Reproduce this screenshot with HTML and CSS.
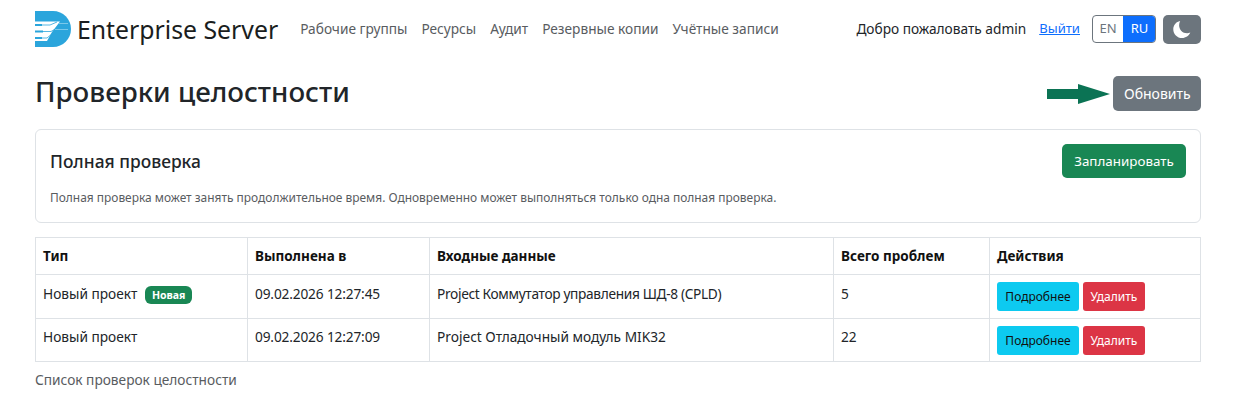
FILE: index.html
```html
<!DOCTYPE html>
<html lang="ru">
<head>
<meta charset="utf-8">
<title>Проверки целостности</title>
<link rel="stylesheet" href="styles.css">
</head>
<body>
<div class="container">
  <nav class="navbar">
    <a class="brand" href="#">
      <svg class="logo" width="36" height="36" viewBox="0 0 36 36">
        <path d="M0 0H18C28 0 36 8 36 18C36 28 28 36 18 36H0Z" fill="#2ba5dc"/>
        <path d="M0 10.5H25L17 21L12 30H0Z" fill="#fff"/>
        <path d="M0 14H7M0 20.5H8M0 27H7" stroke="#2ba5dc" stroke-width="2"/>
        <path d="M7 14H15L22 11M8 20.5H16L22 17M7 27H12L18 22" fill="none" stroke="#2ba5dc" stroke-width="0.8"/>
        <path d="M23 12.5H33M20 18.5H33" stroke="#8fd0ee" stroke-width="0.8"/>
      </svg>
      <span class="brand-name">Enterprise Server</span>
    </a>
    <ul class="nav-links">
      <li><a href="#">Рабочие группы</a></li>
      <li><a href="#">Ресурсы</a></li>
      <li><a href="#">Аудит</a></li>
      <li><a href="#">Резервные копии</a></li>
      <li><a href="#">Учётные записи</a></li>
    </ul>
    <div class="nav-right">
      <span class="welcome">Добро пожаловать admin</span>
      <a class="logout" href="#">Выйти</a>
      <div class="lang">
        <span class="lang-item">EN</span>
        <span class="lang-item active">RU</span>
      </div>
      <button class="theme" aria-label="Тема">
        <svg width="18" height="19" viewBox="0 0 20 20"><path d="M8 0.5C3.5 1.3 0.3 5.2 0.3 9.7C0.3 15.1 4.7 19.5 10.1 19.5C14.2 19.5 17.7 17 19.2 13.4C18.1 14 16.9 14.2 15.7 14.2C10.6 14.2 6.8 10.2 6.8 5.3C6.8 3.6 7.2 2 8 0.5Z" fill="#fff"/></svg>
      </button>
    </div>
  </nav>

  <header class="page-head">
    <h1>Проверки целостности</h1>
    <div class="refresh-wrap">
      <svg class="arrow" width="63" height="20" viewBox="0 0 63 20"><path d="M0 5H31V0L63 10L31 20V15H0Z" fill="#0b7354"/></svg>
      <button class="btn btn-gray">Обновить</button>
    </div>
  </header>

  <section class="card">
    <div class="card-top">
      <h2>Полная проверка</h2>
      <button class="btn btn-green">Запланировать</button>
    </div>
    <p>Полная проверка может занять продолжительное время. Одновременно может выполняться только одна полная проверка.</p>
  </section>

  <table class="table">
    <colgroup>
      <col class="c1"><col class="c2"><col class="c3"><col class="c4"><col class="c5">
    </colgroup>
    <thead>
      <tr><th>Тип</th><th>Выполнена в</th><th>Входные данные</th><th>Всего проблем</th><th>Действия</th></tr>
    </thead>
    <tbody>
      <tr>
        <td>Новый проект <span class="badge">Новая</span></td>
        <td class="date">09.02.2026 12:27:45</td>
        <td class="tight">Project Коммутатор управления ШД-8 (CPLD)</td>
        <td>5</td>
        <td class="actions"><button class="btn-sm info">Подробнее</button><button class="btn-sm danger">Удалить</button></td>
      </tr>
      <tr>
        <td>Новый проект</td>
        <td class="date">09.02.2026 12:27:09</td>
        <td>Project Отладочный модуль MIK32</td>
        <td>22</td>
        <td class="actions"><button class="btn-sm info">Подробнее</button><button class="btn-sm danger">Удалить</button></td>
      </tr>
    </tbody>
  </table>
  <p class="caption">Список проверок целостности</p>
</div>
</body>
</html>
```
FILE: styles.css
```css
* { box-sizing: border-box; }
html, body { margin: 0; padding: 0; }
body { background: #fff; color: #212529; font-family: "Noto Sans", "Open Sans", sans-serif; font-size: 13.7px; line-height: 1.5; }
a { text-decoration: none; }
button { font-family: inherit; border: 0; cursor: pointer; }
.container { width: 1166px; margin: 0 0 0 35px; }

.navbar { display: flex; align-items: center; height: 57px; padding-top: 1px; }
.brand { display: flex; align-items: center; color: #212529; margin-right: 22px; }
.logo { display: block; }
.brand-name { font-size: 24.8px; line-height: 32px; margin-left: 6px; color: #1a1d20; }
.nav-links { display: flex; gap: 14px; list-style: none; margin: 0; padding: 0; }
.nav-links a { color: #595c5f; }
.nav-right { display: flex; align-items: center; margin-left: auto; }
.welcome { color: #212529; }
.logout { color: #0d6efd; text-decoration: underline; margin-left: 13px; font-size: 13.1px; }
.lang { display: flex; height: 28px; margin-left: 12px; border-radius: 4px; overflow: hidden; border: 1px solid #6c757d; }
.lang-item { width: 30px; display: flex; align-items: center; justify-content: center; color: #6c757d; font-size: 13px; }
.lang-item.active { background: #0d6efd; color: #fff; margin: -1px -1px -1px 0; width: 33px; }
.theme { display: flex; align-items: center; justify-content: center; width: 38px; height: 29px; margin-left: 7px; border-radius: 5px; background: #6c757d; padding: 0; }

.page-head { display: flex; align-items: center; justify-content: space-between; height: 35px; margin-top: 19px; }
h1 { margin: -5px 0 0; font-size: 27.7px; font-weight: 500; line-height: 34px; color: #212529; }
.refresh-wrap { display: flex; align-items: center; }
.arrow { display: block; margin-right: 3px; }
.btn { height: 35px; border-radius: 5px; color: #fff; font-size: 14px; padding: 0 11px; }
.btn-gray { background: #6c757d; width: 88px; }
.btn-green { background: #198754; width: 124px; height: 34px; font-size: 13.4px; }

.card { margin-top: 18px; height: 94px; border: 1px solid #dee2e6; border-radius: 6px; padding: 14px 14px 0; }
.card-top { display: flex; align-items: center; justify-content: space-between; }
h2 { margin: 0; font-size: 17.4px; font-weight: 500; line-height: 34px; }
.card p { margin: 11px 0 0; font-size: 11.95px; line-height: 18px; color: #595c5f; }

.table { width: 1165px; margin-top: 14px; border-collapse: collapse; table-layout: fixed; }
.c1 { width: 212px; } .c2 { width: 182px; } .c3 { width: 404px; } .c4 { width: 156px; } .c5 { width: 211px; }
th, td { border: 1px solid #dee2e6; padding: 0 7px; text-align: left; vertical-align: middle; }
th { height: 37px; font-weight: 700; color: #111; font-size: 13.5px; }
td { height: 44px; padding-bottom: 5px; color: #212529; }
td.date { letter-spacing: -0.15px; }
td.tight { letter-spacing: -0.33px; }
tbody tr:last-child td { height: 43px; }
.badge { display: inline-block; margin-left: 4px; background: #198754; color: #fff; font-size: 10.5px; font-weight: 700; line-height: 18px; padding: 0 7px; border-radius: 6px; vertical-align: 0; }
td.actions { padding: 0 7px; white-space: nowrap; }
.btn-sm { height: 29px; border-radius: 3px; font-size: 12px; padding: 0; vertical-align: middle; }
.info { width: 82px; background: #0dcaf0; color: #111; }
.danger { width: 62px; margin-left: 4px; background: #dc3545; color: #fff; }
.caption { margin: 8px 0 0; color: #595c5f; }
```
